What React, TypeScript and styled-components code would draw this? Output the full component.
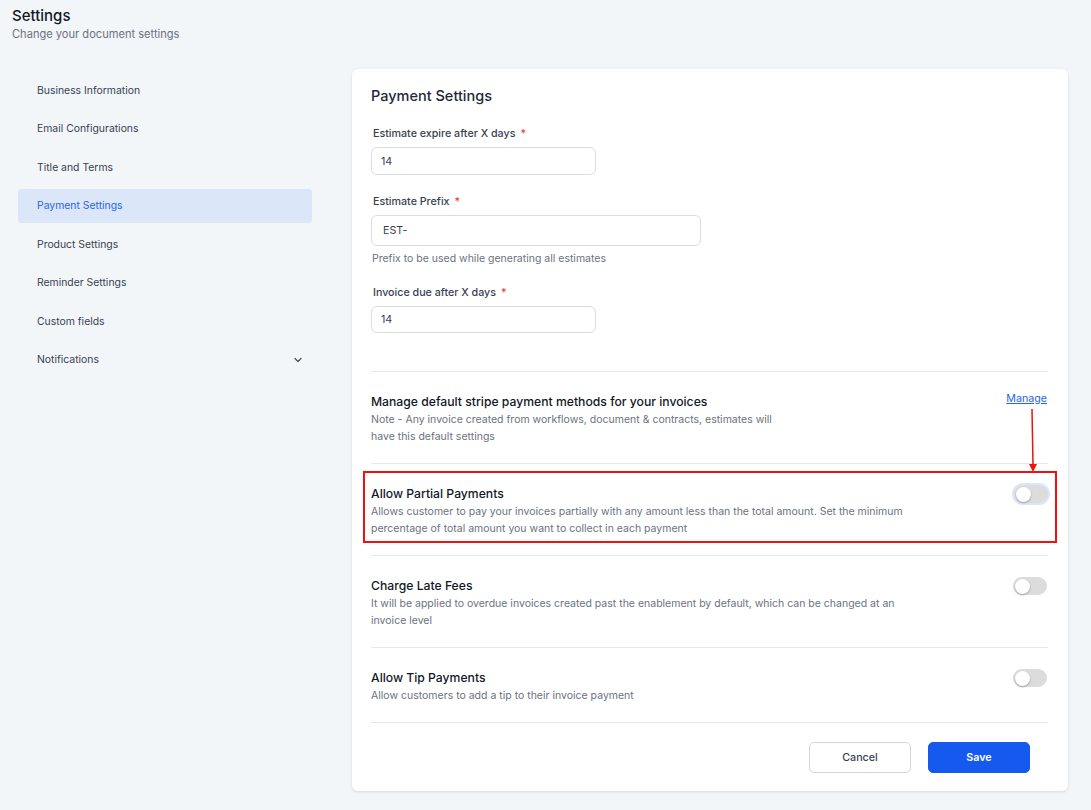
import React, { useState } from 'react';
import styled, { createGlobalStyle } from 'styled-components';

const GlobalStyle = createGlobalStyle`
  html, body {
    margin: 0;
    padding: 0;
    background: #f3f6f9;
    font-family: Inter, "Noto Sans", sans-serif;
    color: #1f2937;
  }
`;

const Page = styled.div`
  width: 1091px;
  height: 810px;
  box-sizing: border-box;
  padding: 6px 23px 0 12px;
  display: flex;
  flex-direction: column;
`;

const Header = styled.div`
  display: flex;
  flex-direction: column;
`;

const PageTitle = styled.h1`
  margin: 0;
  font-size: 15px;
  font-weight: 500;
  line-height: 20px;
  color: #111827;
`;

const PageSubtitle = styled.p`
  margin: 0;
  font-size: 11.1px;
  line-height: 16px;
  color: #6b7280;
`;

const Body = styled.div`
  display: flex;
  gap: 40px;
  margin-top: 27px;
`;

const Sidebar = styled.nav`
  width: 294px;
  margin-left: 6px;
  display: flex;
  flex-direction: column;
  gap: 4.5px;
  padding-top: 4px;
`;

const NavItem = styled.div<{ $active?: boolean }>`
  height: 34px;
  display: flex;
  align-items: center;
  justify-content: space-between;
  padding: 0 8px 0 19px;
  border-radius: 3px;
  font-size: 10.4px;
  color: ${({ $active }) => ($active ? '#2563eb' : '#374151')};
  background: ${({ $active }) => ($active ? '#dbe7f8' : 'transparent')};
`;

const Card = styled.section`
  width: 716px;
  height: 722px;
  box-sizing: border-box;
  background: #ffffff;
  border-radius: 6px;
  box-shadow: 0 1px 3px rgba(15, 23, 42, 0.12);
  padding: 17px 20px 0 19px;
  display: flex;
  flex-direction: column;
`;

const CardTitle = styled.h2`
  margin: 0;
  font-size: 14.5px;
  font-weight: 500;
  line-height: 20px;
  color: #1f2937;
`;

const Field = styled.div<{ $gap: number }>`
  display: flex;
  flex-direction: column;
  margin-top: ${({ $gap }) => $gap}px;
`;

const Label = styled.label`
  font-size: 10.7px;
  font-weight: 500;
  line-height: 14px;
  color: #374151;
  margin: 0 0 6px 2px;

  span {
    color: #ef4444;
    margin-left: 5px;
  }
`;

const Input = styled.input<{ $width: number; $height: number; $pad?: number }>`
  width: ${({ $width }) => $width}px;
  height: ${({ $height }) => $height}px;
  box-sizing: border-box;
  border: 1px solid #d9dde3;
  border-radius: 6px;
  padding: 0 ${({ $pad }) => $pad ?? 9}px;
  font-family: inherit;
  font-size: 10.7px;
  color: #374151;
  outline: none;
`;

const Help = styled.div`
  font-size: 10.5px;
  line-height: 14px;
  color: #6b7280;
  margin: 6px 0 0 1px;
`;

const Spacer = styled.div<{ $h: number }>`
  height: ${({ $h }) => $h}px;
`;

const Divider = styled.hr`
  width: 100%;
  border: 0;
  border-top: 1px solid #e5e7eb;
  margin: 0;
`;

const Row = styled.div<{ $highlight?: boolean }>`
  display: flex;
  justify-content: space-between;
  align-items: flex-start;
  position: relative;
  padding: ${({ $highlight }) => ($highlight ? '12px 7px 4px 6px' : '21px 1px 18px 0')};
  margin: ${({ $highlight }) => ($highlight ? '7px -9px 12px -8px' : '0')};
  border: ${({ $highlight }) => ($highlight ? '2px solid #ef1010' : '0')};
`;

const RowText = styled.div`
  display: flex;
  flex-direction: column;
`;

const RowTitle = styled.div`
  font-size: 12.2px;
  font-weight: 500;
  line-height: 18px;
  color: #111827;
`;

const RowDesc = styled.div<{ $width: number }>`
  font-size: 10.5px;
  line-height: 17px;
  color: #6b7280;
  max-width: ${({ $width }) => $width}px;
`;

const ManageLink = styled.a`
  font-size: 10.7px;
  color: #2563eb;
  text-decoration: underline;
  line-height: 14px;
  margin-top: -1px;
  cursor: pointer;
`;

const Track = styled.button<{ $on: boolean; $focus?: boolean }>`
  width: 34px;
  height: 18px;
  flex-shrink: 0;
  border-radius: 9px;
  border: 0;
  padding: 2px;
  background: ${({ $on }) => ($on ? '#1559ef' : '#dcdcdc')};
  box-shadow: ${({ $focus }) => ($focus ? '0 0 0 2px #dbe6fb' : 'none')};
  display: flex;
  justify-content: ${({ $on }) => ($on ? 'flex-end' : 'flex-start')};
  cursor: pointer;
`;

const Knob = styled.span`
  width: 15px;
  height: 15px;
  margin-top: -0.5px;
  border-radius: 50%;
  background: #ffffff;
  box-shadow: 0 1px 2px rgba(0, 0, 0, 0.3);
`;

const Arrow = styled.svg`
  position: absolute;
  right: 17px;
  top: -64px;
  overflow: visible;
`;

const Footer = styled.div`
  display: flex;
  justify-content: flex-end;
  gap: 17px;
  padding: 19px 18px 0 0;
`;

const Button = styled.button<{ $primary?: boolean }>`
  width: 102px;
  height: 31px;
  border-radius: 5px;
  font-family: inherit;
  font-size: 10.7px;
  font-weight: ${({ $primary }) => ($primary ? 600 : 500)};
  border: 1px solid ${({ $primary }) => ($primary ? '#1559ef' : '#d1d5db')};
  background: ${({ $primary }) => ($primary ? '#1559ef' : '#ffffff')};
  color: ${({ $primary }) => ($primary ? '#ffffff' : '#374151')};
  cursor: pointer;
`;

function Toggle({ focus }: { focus?: boolean }) {
  const [on, setOn] = useState(false);
  return (
    <Track $on={on} $focus={focus} onClick={() => setOn(!on)}>
      <Knob />
    </Track>
  );
}

const navItems = [
  'Business Information',
  'Email Configurations',
  'Title and Terms',
  'Payment Settings',
  'Product Settings',
  'Reminder Settings',
  'Custom fields',
  'Notifications',
];

export default function App() {
  return (
    <>
      <GlobalStyle />
      <Page>
        <Header>
          <PageTitle>Settings</PageTitle>
          <PageSubtitle>Change your document settings</PageSubtitle>
        </Header>
        <Body>
          <Sidebar>
            {navItems.map((item) => (
              <NavItem key={item} $active={item === 'Payment Settings'}>
                {item}
                {item === 'Notifications' && (
                  <svg width="12" height="12" viewBox="0 0 24 24" fill="none" stroke="#4b5563" strokeWidth="2.5" strokeLinecap="round" strokeLinejoin="round">
                    <path d="m6 9 6 6 6-6" />
                  </svg>
                )}
              </NavItem>
            ))}
          </Sidebar>
          <Card>
            <CardTitle>Payment Settings</CardTitle>
            <Field $gap={21}>
              <Label>Estimate expire after X days<span>*</span></Label>
              <Input $width={225} $height={28} defaultValue="14" />
            </Field>
            <Field $gap={20}>
              <Label>Estimate Prefix<span>*</span></Label>
              <Input $width={330} $height={31} $pad={11} defaultValue="EST-" />
              <Help>Prefix to be used while generating all estimates</Help>
            </Field>
            <Field $gap={20}>
              <Label>Invoice due after X days<span>*</span></Label>
              <Input $width={225} $height={27} defaultValue="14" />
            </Field>
            <Spacer $h={38} />
            <Divider />
            <Row>
              <RowText>
                <RowTitle>Manage default stripe payment methods for your invoices</RowTitle>
                <RowDesc $width={415}>
                  Note - Any invoice created from workflows, document &amp; contracts, estimates will have this default settings
                </RowDesc>
              </RowText>
              <ManageLink>Manage</ManageLink>
            </Row>
            <Divider />
            <Row $highlight>
              <Arrow width="10" height="64" viewBox="0 0 10 64">
                <line x1="4" y1="0" x2="5" y2="56" stroke="#ef1010" strokeWidth="1.5" />
                <path d="M1 55 L5 63 L9 55 Z" fill="#ef1010" />
              </Arrow>
              <RowText>
                <RowTitle>Allow Partial Payments</RowTitle>
                <RowDesc $width={550}>
                  Allows customer to pay your invoices partially with any amount less than the total amount. Set the minimum percentage of total amount you want to collect in each payment
                </RowDesc>
              </RowText>
              <Toggle focus />
            </Row>
            <Divider />
            <Row>
              <RowText>
                <RowTitle>Charge Late Fees</RowTitle>
                <RowDesc $width={550}>
                  It will be applied to overdue invoices created past the enablement by default, which can be changed at an invoice level
                </RowDesc>
              </RowText>
              <Toggle />
            </Row>
            <Divider />
            <Row>
              <RowText>
                <RowTitle>Allow Tip Payments</RowTitle>
                <RowDesc $width={550}>Allow customers to add a tip to their invoice payment</RowDesc>
              </RowText>
              <Toggle />
            </Row>
            <Divider />
            <Footer>
              <Button>Cancel</Button>
              <Button $primary>Save</Button>
            </Footer>
          </Card>
        </Body>
      </Page>
    </>
  );
}
